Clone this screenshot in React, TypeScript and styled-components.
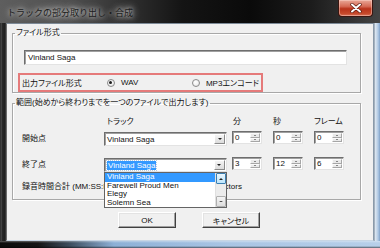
import React from 'react';
import styled, { createGlobalStyle, css } from 'styled-components';

const UI_FONT = `"Liberation Sans", "Noto Sans CJK JP", sans-serif`;

const Global = createGlobalStyle`
  html, body { margin: 0; padding: 0; background: #000; }
  body { width: 380px; height: 248px; overflow: hidden; }
  * { box-sizing: border-box; }
`;

const Window = styled.div`
  width: 380px;
  height: 248px;
  display: flex;
  flex-direction: column;
  font-family: ${UI_FONT};
  font-size: 8px;
  color: #111;
  font-feature-settings: "palt";
  background: #1a1a1a;
`;

const TitleBar = styled.div`
  height: 23px;
  flex: none;
  display: flex;
  align-items: flex-start;
  justify-content: space-between;
  background: linear-gradient(90deg, #5e5e5e 0%, #505050 18%, #333 32%, #141414 48%, #0a0a0a 66%, #1c1c1c 82%, #444 100%);
`;

const Title = styled.div`
  padding: 6px 0 0 7px;
  font-family: "Noto Sans CJK JP", sans-serif;
  font-feature-settings: normal;
  font-size: 9px;
  line-height: 14px;
  color: #1c1c1c;
  text-shadow: 0 0 4px rgba(255,255,255,0.85), 0 0 8px rgba(255,255,255,0.6), 0 0 12px rgba(255,255,255,0.4);
`;

const CloseButton = styled.div`
  width: 35px;
  height: 17px;
  margin-right: 7px;
  display: flex;
  align-items: center;
  justify-content: center;
  border: 1px solid #3a1610;
  border-top: none;
  border-radius: 0 0 4px 4px;
  background: linear-gradient(180deg, #e9a898 0%, #d56a55 40%, #b8321a 55%, #c64a2c 85%, #d8735a 100%);
  box-shadow: inset 0 0 0 1px rgba(255,220,210,0.45);
`;

const Middle = styled.div`
  flex: 1;
  display: flex;
  min-height: 0;
`;

const LeftFrame = styled.div`
  width: 6px;
  flex: none;
  background: linear-gradient(90deg, #0c0c0c 0px, #5a5a5a 1px, #2a2a2a 2px, #1e1e1e 5px, #4a4a4a 6px);
`;

const RightFrame = styled.div`
  width: 6px;
  flex: none;
  background: linear-gradient(90deg, #6a7a8a 0px, #dfe9f3 1px, #c3d5e8 3px, #9ab9dc 5px, #7f9ec2 6px);
`;

const BottomFrame = styled.div`
  height: 7px;
  flex: none;
  background:
    linear-gradient(180deg, rgba(255,255,255,0.35) 0px, rgba(255,255,255,0) 2px, rgba(0,0,0,0) 5px, rgba(0,0,0,0.55) 7px),
    linear-gradient(90deg, #0c0c0c 0%, #151515 10%, #3a4a5a 18%, #8db0d6 30%, #a9c5e4 60%, #b7cfe9 100%);
`;

const Client = styled.div`
  flex: 1;
  display: flex;
  flex-direction: column;
  background: #f0f0f0;
  border-top: 1px solid #7d8a97;
  border-left: 1px solid #6c6c6c;
  border-right: 1px solid #8a9aaa;
  border-bottom: 1px solid #c8d6e4;
  padding: 4px 0 0 5px;
`;

const GroupBox = styled.fieldset<{ $top?: number }>`
  margin: ${p => p.$top ?? 0}px 0 0 0;
  padding: 0;
  width: 349px;
  min-width: 0;
  border: 1px solid #a8a8a8;
  box-shadow: 1px 1px 0 #fff, inset 1px 1px 0 #fff;
`;

const Legend = styled.legend`
  padding: 0 1px;
  margin-left: 2px;
  font-size: 8px;
  line-height: 10px;
`;

const FileSection = styled.div`
  display: flex;
  flex-direction: column;
  align-items: flex-start;
`;

const TextInput = styled.div`
  margin: 12px 0 0 11px;
  width: 323px;
  height: 15px;
  padding: 0 3px;
  display: flex;
  align-items: center;
  background: #fff;
  border: 1px solid;
  border-color: #6e6e6e #e3e3e3 #e3e3e3 #6e6e6e;
  box-shadow: inset 1px 1px 0 #a0a0a0;
`;

const HighlightBox = styled.div`
  margin: 8px 0 0 5px;
  width: 245px;
  height: 19px;
  display: flex;
  align-items: center;
  padding-left: 2px;
  border: 2px solid #e57a7a;
`;

const FormatLabel = styled.span`
  width: 86px;
`;

const RadioItem = styled.label<{ $width: number }>`
  width: ${p => p.$width}px;
  display: flex;
  align-items: center;
  gap: 6px;
`;

const Radio = styled.span<{ $checked?: boolean }>`
  width: 8px;
  height: 8px;
  flex: none;
  border-radius: 50%;
  border: 1px solid #8b8b8b;
  background: radial-gradient(circle at 40% 35%, #ffffff 0%, #f2f2f2 50%, #d8d8d8 100%);
  display: flex;
  align-items: center;
  justify-content: center;
  ${p => p.$checked && css`
    &::after {
      content: '';
      width: 3px;
      height: 3px;
      border-radius: 50%;
      background: #1a1a1a;
    }
  `}
`;

const RangeGrid = styled.div`
  display: grid;
  grid-template-columns: 82px 128px 41px 41px 30px;
  grid-template-rows: 15px 26px 24px 10px;
  align-items: start;
  padding: 9px 0 7px 9px;
`;

const HeaderCell = styled.div<{ $indent?: number }>`
  line-height: 10px;
  padding-left: ${p => p.$indent ?? 0}px;
`;

const RowLabel = styled.div`
  line-height: 14px;
`;

const ComboWrap = styled.div`
  position: relative;
  width: 123px;
`;

const Combo = styled.div`
  width: 123px;
  height: 14px;
  display: flex;
  align-items: center;
  background: #fff;
  border: 1px solid;
  border-color: #6e6e6e #e3e3e3 #e3e3e3 #6e6e6e;
  box-shadow: inset 1px 1px 0 #a0a0a0;
  padding: 0 1px 0 2px;
`;

const ComboText = styled.span<{ $selected?: boolean }>`
  flex: 1;
  line-height: 9px;
  ${p => p.$selected && css`
    flex: none;
    margin-right: auto;
    background: #3399ff;
    color: #fff;
    padding: 0 1px;
    outline: 1px dotted #bcd;
  `}
`;

const ArrowButton = styled.span`
  width: 11px;
  height: 10px;
  margin-left: auto;
  display: flex;
  align-items: center;
  justify-content: center;
  background: linear-gradient(180deg, #f4f4f4, #dcdcdc);
  border: 1px solid;
  border-color: #fff #8a8a8a #8a8a8a #fff;
`;

const Triangle = styled.span<{ $up?: boolean; $size?: number }>`
  width: 0;
  height: 0;
  border-left: ${p => p.$size ?? 2.5}px solid transparent;
  border-right: ${p => p.$size ?? 2.5}px solid transparent;
  ${p => p.$up
    ? css`border-bottom: ${(p.$size ?? 2.5) * 0.8}px solid #222;`
    : css`border-top: ${(p.$size ?? 2.5) * 0.8}px solid #222;`}
`;

const SpinBox = styled.div`
  width: 30px;
  height: 13px;
  margin-top: -1px;
  display: flex;
  align-items: stretch;
  background: #fff;
  border: 1px solid;
  border-color: #6e6e6e #e3e3e3 #e3e3e3 #6e6e6e;
  box-shadow: inset 1px 1px 0 #a0a0a0;
`;

const SpinValue = styled.span`
  flex: 1;
  padding-left: 2px;
  line-height: 11px;
`;

const SpinButtons = styled.span`
  width: 10px;
  display: flex;
  flex-direction: column;
  margin: 1px 1px 1px 0;
`;

const SpinHalf = styled.span`
  flex: 1;
  display: flex;
  align-items: center;
  justify-content: center;
  background: #e9e9e9;
  border: 1px solid;
  border-color: #fafafa #a6a6a6 #a6a6a6 #fafafa;
`;

const DropList = styled.div`
  position: absolute;
  top: 100%;
  left: 0;
  width: 123px;
  height: 36px;
  z-index: 2;
  display: flex;
  background: #fff;
  border: 1px solid #646464;
`;

const ListItems = styled.div`
  flex: 1;
  display: flex;
  flex-direction: column;
`;

const ListItem = styled.div<{ $selected?: boolean }>`
  height: 8.5px;
  line-height: 8.5px;
  padding-left: 2px;
  white-space: nowrap;
  ${p => p.$selected && css`
    background: #3399ff;
    color: #fff;
  `}
`;

const ScrollBar = styled.div`
  width: 11px;
  display: flex;
  flex-direction: column;
  background: #ececec;
  border-left: 1px solid #e0e0e0;
`;

const ScrollButton = styled.div<{ $hover?: boolean }>`
  height: 11px;
  display: flex;
  align-items: center;
  justify-content: center;
  border: 1px solid ${p => (p.$hover ? '#3c7fb1' : '#b0b0b0')};
  border-radius: 1px;
  background: ${p => (p.$hover
    ? 'linear-gradient(180deg, #eaf6fd, #bee6fd)'
    : 'linear-gradient(180deg, #f4f4f4, #dedede)')};
`;

const ScrollTrack = styled.div`
  flex: 1;
`;

const TotalRow = styled.div`
  grid-column: 1 / -1;
  display: flex;
  line-height: 10px;
  white-space: nowrap;
`;

const TotalLabel = styled.span`
  width: 179px;
  flex: none;
`;

const ButtonRow = styled.div`
  display: flex;
  gap: 26px;
  margin-top: 12px;
  padding-left: 106px;
`;

const PushButton = styled.button`
  width: 58px;
  height: 16px;
  padding: 0;
  font-family: ${UI_FONT};
  font-feature-settings: "palt";
  font-size: 8px;
  color: #111;
  background: #f0f0f0;
  border: 1px solid;
  border-color: #fff #404040 #404040 #fff;
  box-shadow: inset -1px -1px 0 #a0a0a0, inset 1px 1px 0 #e3e3e3;
`;

const CloseIcon = () => (
  <svg width="12" height="10" viewBox="0 0 12 10">
    <path d="M2 1.5 L10 8.5 M10 1.5 L2 8.5" stroke="#5a1a10" strokeWidth="3.4" strokeLinecap="round" />
    <path d="M2 1.5 L10 8.5 M10 1.5 L2 8.5" stroke="#fff" strokeWidth="2" strokeLinecap="round" />
  </svg>
);

const Spin: React.FC<{ value: string }> = ({ value }) => (
  <SpinBox>
    <SpinValue>{value}</SpinValue>
    <SpinButtons>
      <SpinHalf><Triangle $up $size={1.5} /></SpinHalf>
      <SpinHalf><Triangle $size={1.5} /></SpinHalf>
    </SpinButtons>
  </SpinBox>
);

const tracks = ['Vinland Saga', 'Farewell Proud Men', 'Elegy', 'Solemn Sea'];

export default function App() {
  return (
    <>
      <Global />
      <Window>
        <TitleBar>
          <Title>トラックの部分取り出し・合成</Title>
          <CloseButton><CloseIcon /></CloseButton>
        </TitleBar>
        <Middle>
          <LeftFrame />
          <Client>
            <GroupBox>
              <Legend>ファイル形式</Legend>
              <FileSection>
                <TextInput>Vinland Saga</TextInput>
                <HighlightBox>
                  <FormatLabel>出力ファイル形式</FormatLabel>
                  <RadioItem $width={86}><Radio $checked />WAV</RadioItem>
                  <RadioItem $width={70}><Radio />MP3エンコード</RadioItem>
                </HighlightBox>
              </FileSection>
            </GroupBox>
            <GroupBox $top={5}>
              <Legend>範囲(始めから終わりまでを一つのファイルで出力します)</Legend>
              <RangeGrid>
                <span />
                <HeaderCell $indent={3}>トラック</HeaderCell>
                <HeaderCell $indent={1}>分</HeaderCell>
                <HeaderCell>秒</HeaderCell>
                <HeaderCell>フレーム</HeaderCell>

                <RowLabel>開始点</RowLabel>
                <ComboWrap>
                  <Combo>
                    <ComboText>Vinland Saga</ComboText>
                    <ArrowButton><Triangle /></ArrowButton>
                  </Combo>
                </ComboWrap>
                <Spin value="0" />
                <Spin value="0" />
                <Spin value="0" />

                <RowLabel>終了点</RowLabel>
                <ComboWrap>
                  <Combo>
                    <ComboText $selected>Vinland Saga</ComboText>
                    <ArrowButton><Triangle /></ArrowButton>
                  </Combo>
                  <DropList>
                    <ListItems>
                      {tracks.map((t, i) => (
                        <ListItem key={t} $selected={i === 0}>{t}</ListItem>
                      ))}
                    </ListItems>
                    <ScrollBar>
                      <ScrollButton $hover><Triangle $up $size={2.5} /></ScrollButton>
                      <ScrollTrack />
                      <ScrollButton><Triangle $size={2} /></ScrollButton>
                    </ScrollBar>
                  </DropList>
                </ComboWrap>
                <Spin value="3" />
                <Spin value="12" />
                <Spin value="6" />

                <TotalRow>
                  <TotalLabel>録音時間合計 (MM:SS:FF)</TotalLabel>
                  <span>Conductors</span>
                </TotalRow>
              </RangeGrid>
            </GroupBox>
            <ButtonRow>
              <PushButton>OK</PushButton>
              <PushButton>キャンセル</PushButton>
            </ButtonRow>
          </Client>
          <RightFrame />
        </Middle>
        <BottomFrame />
      </Window>
    </>
  );
}
